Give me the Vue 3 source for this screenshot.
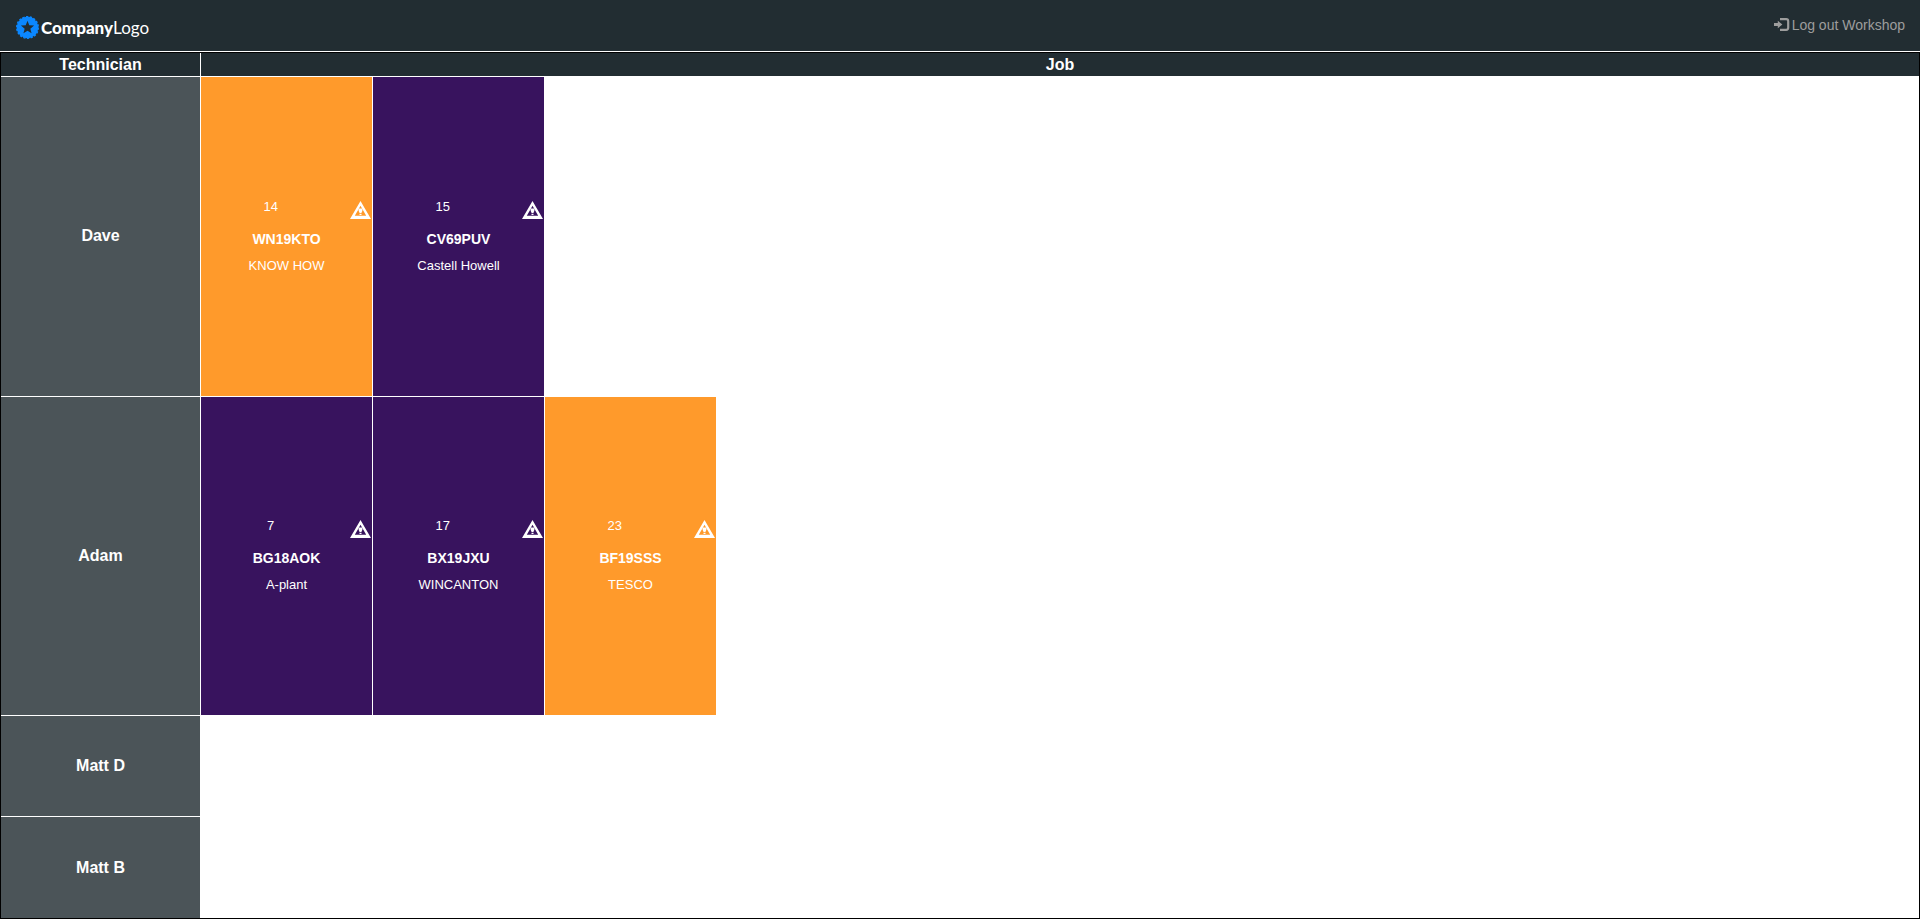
<script setup>
const technicians = [
  {
    name: 'Dave',
    jobs: [
      { id: 14, plate: 'WN19KTO', customer: 'KNOW HOW', tone: 'orange' },
      { id: 15, plate: 'CV69PUV', customer: 'Castell Howell', tone: 'purple' },
    ],
  },
  {
    name: 'Adam',
    jobs: [
      { id: 7, plate: 'BG18AOK', customer: 'A-plant', tone: 'purple' },
      { id: 17, plate: 'BX19JXU', customer: 'WINCANTON', tone: 'purple' },
      { id: 23, plate: 'BF19SSS', customer: 'TESCO', tone: 'orange' },
    ],
  },
  { name: 'Matt D', jobs: [] },
  { name: 'Matt B', jobs: [] },
]
</script>

<template>
  <div class="page">
    <header class="navbar">
      <a class="brand" href="#">
        <svg class="brand-mark" viewBox="0 0 22 22" aria-hidden="true">
          <circle cx="11" cy="11" r="10.2" fill="#0b87ff" />
          <circle cx="11" cy="11" r="10.3" fill="none" stroke="#0b87ff" stroke-width="1.4" stroke-dasharray="2.2 1.4" />
          <path d="M11 4.6l1.7 4.3 4.6.3-3.6 2.9 1.2 4.5-3.9-2.5-3.9 2.5 1.2-4.5-3.6-2.9 4.6-.3z" fill="#222d32" />
        </svg>
        <span class="brand-text"><b>Company</b>Logo</span>
      </a>
      <a class="logout" href="#">
        <svg class="logout-icon" viewBox="0 0 16 13" aria-hidden="true">
          <path d="M6 1.2h6.2q2 0 2 2v6.6q0 2-2 2H6" fill="none" stroke="currentColor" stroke-width="2.2" />
          <path d="M0 5h3.8V2.8L8.4 6.5l-4.6 3.7V8H0z" fill="currentColor" />
        </svg>
        <span>Log out Workshop</span>
      </a>
    </header>

    <table class="board">
      <thead>
        <tr class="row">
          <th class="tech" scope="col">Technician</th>
          <th class="jobs-title" scope="col">Job</th>
        </tr>
      </thead>
      <tbody>
        <tr v-for="tech in technicians" :key="tech.name" class="row" :class="tech.jobs.length ? 'busy' : 'idle'">
          <th class="tech" scope="row">{{ tech.name }}</th>
          <td class="jobs">
            <article v-for="job in tech.jobs" :key="job.id" class="job" :class="job.tone">
              <div class="job-top">
                <span class="job-id">{{ job.id }}</span>
                <svg class="warning" viewBox="0 0 21 18" role="img" aria-label="Warning">
                  <path fill="#fff" fill-rule="evenodd" d="M10.5 0L21 18H0zM10.5 4.8L4.8 14.7h11.4z" />
                  <path fill="#fff" d="M8.6 7.5h3.8v2.2l-1 2.2H9.6l-1-2.2zM9.5 12.7h2v1.3h-2z" />
                </svg>
              </div>
              <strong class="plate">{{ job.plate }}</strong>
              <span class="customer">{{ job.customer }}</span>
            </article>
          </td>
        </tr>
      </tbody>
    </table>
  </div>
</template>

<style>
body {
  margin: 0;
}
</style>

<style scoped>
.page {
  display: flex;
  flex-direction: column;
  box-sizing: border-box;
  min-height: 100vh;
  background: #fff;
  color: #fff;
  font-family: "Liberation Sans", Arial, sans-serif;
}

.navbar {
  display: flex;
  align-items: center;
  justify-content: space-between;
  box-sizing: border-box;
  height: 52px;
  padding: 0 15px 2px 16px;
  border-bottom: 1px solid #fff;
  background: #222d32;
}

.brand {
  display: flex;
  align-items: center;
  gap: 2px;
  padding-top: 6px;
  color: #fff;
  text-decoration: none;
}

.brand-mark {
  width: 23px;
  height: 23px;
}

.brand-text {
  font: 17px/20px Lato, sans-serif;
}

.brand-text b {
  font-weight: 900;
}

.logout {
  display: flex;
  align-items: center;
  gap: 2px;
  color: #9d9d9d;
  font-size: 14px;
  line-height: 20px;
  text-decoration: none;
}

.logout-icon {
  width: 16px;
  height: 13px;
}

.board {
  display: flex;
  flex: 1;
  flex-direction: column;
  border: 1px solid #000;
}

.board tbody {
  display: flex;
  flex: 1;
  flex-direction: column;
}

.row {
  display: flex;
}

.busy {
  flex: 19 1 0px;
}

.idle {
  flex: 6 1 0px;
}

.tech {
  display: flex;
  flex: none;
  align-items: center;
  justify-content: center;
  box-sizing: border-box;
  width: 200px;
  padding: 0;
  border-right: 1px solid #fff;
  border-bottom: 1px solid #fff;
  background: #4b5458;
  font-size: 16px;
}

.row:last-child .tech {
  border-bottom: 0;
}

thead .row .tech,
.jobs-title {
  box-sizing: border-box;
  height: 24px;
  padding: 0;
  border-bottom: 1px solid #fff;
  background: #222d32;
  font-size: 16px;
  line-height: 23px;
}

thead .row:last-child .tech {
  border-bottom: 1px solid #fff;
}

.jobs-title {
  flex: 1;
  text-align: center;
}

.jobs {
  display: flex;
  flex: 1;
  gap: 1px;
  padding: 0;
  border-bottom: 1px solid #fff;
}

.job {
  display: flex;
  flex-direction: column;
  justify-content: center;
  width: 171px;
  text-align: center;
  font-size: 13px;
  line-height: 20px;
}

.orange {
  background: #ff9a2b;
}

.purple {
  background: #38135e;
}

.job-top {
  display: flex;
  justify-content: space-between;
  padding-right: 1px;
}

.job-id {
  width: 82%;
}

.warning {
  width: 21px;
  height: 18px;
  margin-top: 4px;
}

.plate {
  margin: 10px 0 7px;
  font-size: 14px;
}
</style>
